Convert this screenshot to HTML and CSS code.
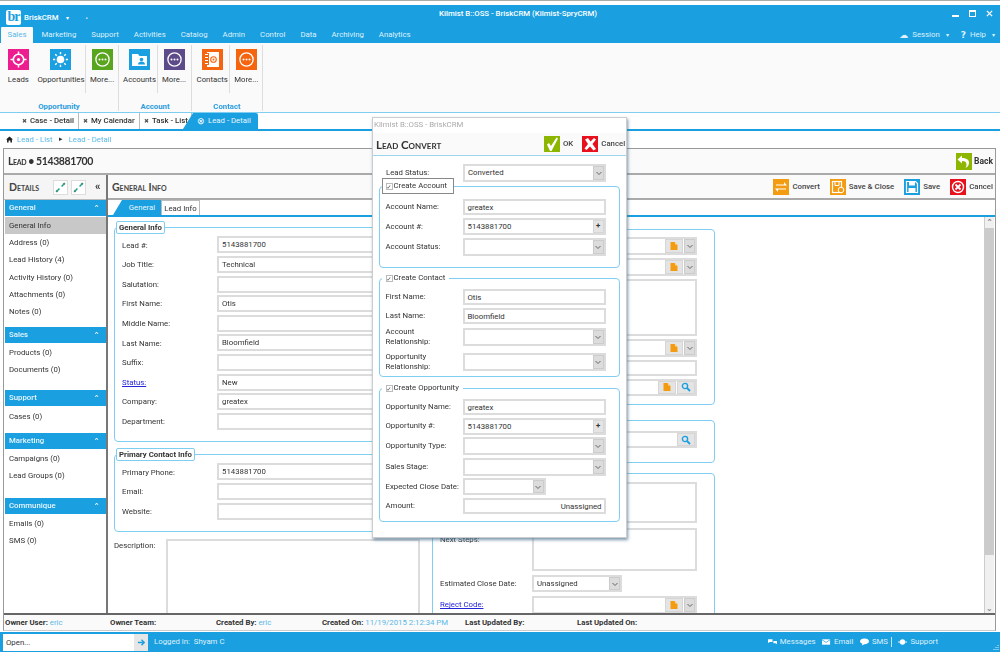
FILE: index.html
```html
<!DOCTYPE html>
<html lang="en">
<head>
<meta charset="utf-8">
<title>BriskCRM</title>
<link rel="stylesheet" href="styles.css">
</head>
<body>
<svg class="defs" width="0" height="0" aria-hidden="true">
  <symbol id="i-more" viewBox="0 0 21 21"><circle cx="10.5" cy="10.5" r="6.6" fill="none" stroke="#fff" stroke-width="1.3"/><circle cx="7.5" cy="10.5" r="1" fill="#fff"/><circle cx="10.5" cy="10.5" r="1" fill="#fff"/><circle cx="13.5" cy="10.5" r="1" fill="#fff"/></symbol>
  <symbol id="i-target" viewBox="0 0 21 21"><circle cx="10.5" cy="10.5" r="5.2" fill="none" stroke="#fff" stroke-width="1.6"/><circle cx="10.5" cy="10.5" r="1.6" fill="#fff"/><path d="M10.5 2.5v3.4M10.5 15.1v3.4M2.5 10.5h3.4M15.1 10.5h3.4" stroke="#fff" stroke-width="1.5"/></symbol>
  <symbol id="i-sun" viewBox="0 0 21 21"><circle cx="10.5" cy="10.5" r="3.8" fill="#fff"/><path d="M10.5 3v2.2M10.5 15.8V18M3 10.5h2.2M15.8 10.5H18M5.2 5.2l1.6 1.6M14.2 14.2l1.6 1.6M15.8 5.2l-1.6 1.6M6.8 14.2l-1.6 1.6" stroke="#fff" stroke-width="1.4"/></symbol>
  <symbol id="i-folder" viewBox="0 0 21 21"><path d="M3 5h6l1.5 2H18v10H3z" fill="#fff"/><circle cx="12.5" cy="10.5" r="1.8" fill="#1a9fe0"/><path d="M9 15.5c0-2 1.6-3 3.5-3s3.500 1 3.500 3z" fill="#1a9fe0"/></symbol>
  <symbol id="i-book" viewBox="0 0 21 21"><rect x="5" y="3" width="12" height="15" fill="#fff"/><path d="M3 5.500h4M3 8.500h4M3 11.500h4M3 14.500h4" stroke="#f5640e" stroke-width="3"/><path d="M3 5.500h3M3 8.500h3M3 11.500h3M3 14.500h3" stroke="#fff" stroke-width="1.200"/><circle cx="11.500" cy="10.500" r="2.800" fill="none" stroke="#f5640e" stroke-width="1.100"/><circle cx="11.500" cy="10.500" r="1" fill="#f5640e"/></symbol>
  <symbol id="i-check" viewBox="0 0 16 16"><path d="M3 8.500l2-1.500 2 3L12.500 1.500l1.500 1L7.500 15H6z" fill="#fff"/></symbol>
  <symbol id="i-x" viewBox="0 0 16 16"><path d="M3 3.500L6 2l2.500 3.500L12 2l2 1.500L10.500 8l3.500 5-2.500 1.500L8 10.500 4.500 14 2.500 12.500 6 8z" fill="#fff"/></symbol>
  <symbol id="i-doc" viewBox="0 0 10 10"><path d="M1.500 1h4l3 3v5h-7z" fill="#f39c12"/><path d="M6 1l2.500 2.500H6z" fill="#fbd38a"/></symbol>
  <symbol id="i-search" viewBox="0 0 10 10"><circle cx="4" cy="4" r="2.600" fill="none" stroke="#1a9fe0" stroke-width="1.400"/><path d="M6 6l3 3" stroke="#1a9fe0" stroke-width="1.800"/></symbol>
  <symbol id="i-chev" viewBox="0 0 8 8"><path d="M1.500 3l2.500 2.500L6.500 3" fill="none" stroke="#666" stroke-width="1"/></symbol>
  <symbol id="i-link" viewBox="0 0 12 12"><path d="M3.500 8.500l1.500-1.500M7 5l1.500-1.500" stroke="#17a589" stroke-width="1.400"/><path d="M2 10l1.500-1.500M8.500 3.500L10 2" stroke="#2e8b7a" stroke-width="1.800"/></symbol>
</svg>

<div class="topline"></div>

<header class="titlebar">
  <div class="brand">
    <span class="logo">br</span>
    <span>BriskCRM</span>
    <span class="caret">▾</span>
    <span class="pin">▪</span>
  </div>
  <div class="apptitle">Kilmist B::OSS - BriskCRM (Kilmist-SpryCRM)</div>
  <div class="winbtns">
    <span class="wb wb-min"></span>
    <span class="wb wb-max"></span>
    <svg class="wb-x" viewBox="0 0 8 8"><path d="M1 1l6 6M7 1L1 7" stroke="#fff" stroke-width="1.500"/></svg>
  </div>
</header>

<nav class="menubar">
  <span class="mtab active">Sales</span>
  <span class="mtab">Marketing</span>
  <span class="mtab">Support</span>
  <span class="mtab">Activities</span>
  <span class="mtab">Catalog</span>
  <span class="mtab">Admin</span>
  <span class="mtab">Control</span>
  <span class="mtab">Data</span>
  <span class="mtab">Archiving</span>
  <span class="mtab">Analytics</span>
  <span class="menuright">
    <span class="glyph">☁</span><span>Session</span><span class="caret">▾</span>
    <span class="glyph help">?</span><span>Help</span><span class="caret">▾</span>
  </span>
</nav>

<section class="ribbon">
  <div class="rgroup g1">
    <div class="ritems">
      <div class="ritem w-leads"><svg class="ricon pink"><use href="#i-target"/></svg><span>Leads</span></div>
      <div class="ritem w-opp"><svg class="ricon blue"><use href="#i-sun"/></svg><span>Opportunities</span></div>
      <div class="rsep"></div>
      <div class="ritem w-more"><svg class="ricon green"><use href="#i-more"/></svg><span>More...</span></div>
    </div>
    <div class="rlabel">Opportunity</div>
  </div>
  <div class="rgroup g2">
    <div class="ritems">
      <div class="ritem w-acc"><svg class="ricon blue"><use href="#i-folder"/></svg><span>Accounts</span></div>
      <div class="rsep"></div>
      <div class="ritem w-more2"><svg class="ricon purple"><use href="#i-more"/></svg><span>More...</span></div>
    </div>
    <div class="rlabel">Account</div>
  </div>
  <div class="rgroup g3">
    <div class="ritems">
      <div class="ritem w-acc"><svg class="ricon orange"><use href="#i-book"/></svg><span>Contacts</span></div>
      <div class="rsep"></div>
      <div class="ritem w-more2"><svg class="ricon orange"><use href="#i-more"/></svg><span>More...</span></div>
    </div>
    <div class="rlabel">Contact</div>
  </div>
</section>

<div class="doctabs">
  <span class="dtab t1"><b>✖</b> Case - Detail</span>
  <span class="dtab t2"><b>✖</b> My Calendar</span>
  <span class="dtab t3"><b>✖</b> Task - List</span>
  <span class="dtab active"><b>⊗</b> Lead - Detail</span>
</div>

<div class="crumbs">
  <svg class="home" viewBox="0 0 8 8"><path d="M4 .5L8 4H6.800v3.500H5V5H3v2.500H1.200V4H0z" fill="#222"/></svg>
  <a>Lead - List</a>
  <span class="crumbarrow">▸</span>
  <a>Lead - Detail</a>
</div>

<main class="panel">
  <div class="pagehead">
    <h1>Lead • 5143881700</h1>
    <span class="backbtn"><svg class="tbicon limebg" viewBox="0 0 16 16"><path d="M6 2L1.500 6 6 10V7.500c3 0 4.500 1 4.500 3.500 0 1.500-.5 2.500-1 3.500 2.500-1 3.500-3 3.500-5.500C13 6 10 4.500 6 4.500z" fill="#fff"/></svg><b>Back</b></span>
  </div>

  <div class="split">
    <aside class="side">
      <div class="sidehead">
        <h2>Details</h2>
        <span class="sbtn"><svg viewBox="0 0 12 12"><use href="#i-link"/></svg></span>
        <span class="sbtn"><svg viewBox="0 0 12 12"><use href="#i-link"/></svg></span>
        <span class="collapse">«</span>
      </div>
      <div class="sgroup">General<i>⌃</i></div>
      <ul class="slist l1">
        <li class="sel">General Info</li>
        <li>Address (0)</li>
        <li>Lead History (4)</li>
        <li>Activity History (0)</li>
        <li>Attachments (0)</li>
        <li>Notes (0)</li>
      </ul>
      <div class="sgroup">Sales<i>⌃</i></div>
      <ul class="slist l2">
        <li>Products (0)</li>
        <li>Documents (0)</li>
      </ul>
      <div class="sgroup">Support<i>⌃</i></div>
      <ul class="slist l3">
        <li>Cases (0)</li>
      </ul>
      <div class="sgroup">Marketing<i>⌃</i></div>
      <ul class="slist l4">
        <li>Campaigns (0)</li>
        <li>Lead Groups (0)</li>
      </ul>
      <div class="sgroup">Communique<i>⌃</i></div>
      <ul class="slist l5">
        <li>Emails (0)</li>
        <li>SMS (0)</li>
      </ul>
    </aside>

    <div class="content">
      <div class="contenthead">
        <h2>General Info</h2>
        <div class="toolbar">
          <span class="tb"><svg class="tbicon amber" viewBox="0 0 16 16"><path d="M3 5.500h8V3l3 3.500H3zM13 10.500H5V13L2 9.500h11z" fill="#fff"/></svg>Convert</span>
          <span class="tb"><svg class="tbicon amber" viewBox="0 0 16 16"><rect x="2.500" y="2.500" width="9" height="11" fill="none" stroke="#fff" stroke-width="1.200"/><path d="M5 2.500v4h4v-4" fill="none" stroke="#fff"/><circle cx="11" cy="11" r="2.800" fill="#f39c12" stroke="#fff"/></svg>Save &amp; Close</span>
          <span class="tb"><svg class="tbicon sky" viewBox="0 0 16 16"><path d="M2.500 2.500h9l2 2v9h-11z" fill="none" stroke="#fff" stroke-width="1.200"/><rect x="5" y="2.500" width="6" height="4" fill="#fff"/><rect x="4.500" y="9" width="7" height="4.500" fill="#fff"/></svg>Save</span>
          <span class="tb"><svg class="tbicon red" viewBox="0 0 16 16"><circle cx="8" cy="8" r="5.500" fill="none" stroke="#fff" stroke-width="1.400"/><path d="M5.500 5.500l5 5M10.500 5.500l-5 5" stroke="#fff" stroke-width="1.800"/></svg>Cancel</span>
        </div>
      </div>

      <div class="tabs">
        <span class="tab active">General</span>
        <span class="tab">Lead Info</span>
      </div>

      <div class="scrollwrap">
        <div class="formarea">
          <div class="col col-left">
            <fieldset class="fs fs-info">
              <legend>General Info</legend>
              <div class="grid">
                <label>Lead #:</label><div class="inp">5143881700</div>
                <label>Job Title:</label><div class="inp">Technical</div>
                <label>Salutation:</label><div class="inp"></div>
                <label>First Name:</label><div class="inp">Otis</div>
                <label>Middle Name:</label><div class="inp"></div>
                <label>Last Name:</label><div class="inp">Bloomfield</div>
                <label>Suffix:</label><div class="inp"></div>
                <label><a class="lnk">Status:</a></label><div class="inp">New</div>
                <label>Company:</label><div class="inp">greatex</div>
                <label>Department:</label><div class="inp"></div>
              </div>
            </fieldset>
            <fieldset class="fs fs-contact">
              <legend>Primary Contact Info</legend>
              <div class="grid">
                <label>Primary Phone:</label><div class="inp">5143881700</div>
                <label>Email:</label><div class="inp"></div>
                <label>Website:</label><div class="inp"></div>
              </div>
            </fieldset>
            <div class="desc">
              <label>Description:</label>
              <div class="inp area"></div>
            </div>
          </div>

          <div class="col col-right">
            <fieldset class="fs rf1">
              <div class="inp ctl h18"><span class="ib"><svg><use href="#i-doc"/></svg></span><span class="dd"><svg><use href="#i-chev"/></svg></span></div>
              <div class="inp ctl h18"><span class="ib"><svg><use href="#i-doc"/></svg></span><span class="dd"><svg><use href="#i-chev"/></svg></span></div>
              <div class="inp area a57"></div>
              <div class="inp ctl h18"><span class="ib"><svg><use href="#i-doc"/></svg></span><span class="dd"><svg><use href="#i-chev"/></svg></span></div>
              <div class="inp h16"></div>
              <div class="inp ctl h17"><span class="ib"><svg><use href="#i-doc"/></svg></span><span class="ib"><svg><use href="#i-search"/></svg></span></div>
            </fieldset>
            <fieldset class="fs rf2">
              <div class="inp ctl h17"><span class="ib"><svg><use href="#i-search"/></svg></span></div>
            </fieldset>
            <fieldset class="fs rf3">
              <div class="inp area a41"></div>
              <div class="rrow tall"><label>Next Steps:</label><div class="inp area a43"></div></div>
              <div class="rrow"><label>Estimated Close Date:</label><div class="inp ctl h17 short">Unassigned<span class="dd"><svg><use href="#i-chev"/></svg></span></div></div>
              <div class="rrow"><label><a class="lnk">Reject Code:</a></label><div class="inp ctl h18"><span class="ib"><svg><use href="#i-doc"/></svg></span><span class="dd"><svg><use href="#i-chev"/></svg></span></div></div>
            </fieldset>
          </div>
        </div>
        <div class="scrollbar">
          <span class="sb-arrow">⌃</span>
          <span class="sb-thumb"></span>
          <span class="sb-arrow down">⌃</span>
        </div>
      </div>
    </div>
  </div>

  <div class="statusbar">
    <span class="st s1"><b>Owner User:</b> <a>eric</a></span>
    <span class="st s2"><b>Owner Team:</b></span>
    <span class="st s3"><b>Created By:</b> <a>eric</a></span>
    <span class="st s4"><b>Created On:</b> <a>11/19/2015 2:12:34 PM</a></span>
    <span class="st s5"><b>Last Updated By:</b></span>
    <span class="st s6"><b>Last Updated On:</b></span>
  </div>
</main>

<footer class="bottombar">
  <div class="openbox">Open...</div>
  <span class="openbtn"><svg viewBox="0 0 10 10"><path d="M1 5h7M5 2l3 3-3 3" fill="none" stroke="#1a9fe0" stroke-width="1.600"/></svg></span>
  <span class="logged">Logged in:&nbsp; Shyam C</span>
  <div class="bbright">
    <span class="bb"><svg viewBox="0 0 10 8"><path d="M0 1h5v3H2L0 5zM6 3h4v3.500L8.500 5.500H6z" fill="#fff"/></svg>Messages</span>
    <span class="bb"><svg viewBox="0 0 10 8"><rect y="1" width="9" height="6" fill="#fff"/><path d="M0 1.500l4.500 3 4.500-3" fill="none" stroke="#1a9fe0" stroke-width=".8"/></svg>Email</span>
    <span class="bb sms"><svg viewBox="0 0 10 8"><path d="M5 0c3 0 5 1.300 5 3.200S8 6.400 5 6.400L2 8l.7-2C1 5.500 0 4.500 0 3.200 0 1.300 2 0 5 0z" fill="#fff"/></svg>SMS</span>
    <span class="bb"><svg viewBox="0 0 10 8"><circle cx="5" cy="4" r="3" fill="#fff"/><path d="M0 4h10" stroke="#fff"/></svg>Support</span>
  </div>
  <svg class="grip" viewBox="0 0 6 6"><path d="M4.500 0h1v1h-1zM2.500 2h1v1h-1zM4.500 2h1v1h-1zM.5 4h1v1h-1zM2.500 4h1v1h-1zM4.500 4h1v1h-1z" fill="#d5eefa"/></svg>
</footer>

<section class="dialog">
  <div class="dlgtitle">Kilmist B::OSS - BriskCRM</div>
  <div class="dlghead">
    <h2>Lead Convert</h2>
    <span class="dlgbtn"><svg class="dlgicon limebg" viewBox="0 0 16 16"><use href="#i-check"/></svg>OK</span>
    <span class="dlgbtn"><svg class="dlgicon redx" viewBox="0 0 16 16"><use href="#i-x"/></svg>Cancel</span>
  </div>
  <div class="dlgbody">
    <div class="drow status"><label>Lead Status:</label><div class="inp ctl h18">Converted<span class="dd"><svg><use href="#i-chev"/></svg></span></div></div>

    <fieldset class="fs dfs d1">
      <legend class="focus"><span class="cb">✓</span>Create Account</legend>
      <div class="drow"><label>Account Name:</label><div class="inp h16">greatex</div></div>
      <div class="drow"><label>Account #:</label><div class="inp ctl h17">5143881700<span class="plus">+</span></div></div>
      <div class="drow"><label>Account Status:</label><div class="inp ctl h18"><span class="dd"><svg><use href="#i-chev"/></svg></span></div></div>
    </fieldset>

    <fieldset class="fs dfs d2">
      <legend><span class="cb">✓</span>Create Contact</legend>
      <div class="drow"><label>First Name:</label><div class="inp h16">Otis</div></div>
      <div class="drow"><label>Last Name:</label><div class="inp h16">Bloomfield</div></div>
      <div class="drow gapped"><label class="two">Account Relationship:</label><div class="inp ctl h18"><span class="dd"><svg><use href="#i-chev"/></svg></span></div></div>
      <div class="drow"><label class="two">Opportunity Relationship:</label><div class="inp ctl h18"><span class="dd"><svg><use href="#i-chev"/></svg></span></div></div>
    </fieldset>

    <fieldset class="fs dfs d3">
      <legend><span class="cb">✓</span>Create Opportunity</legend>
      <div class="drow"><label>Opportunity Name:</label><div class="inp h16">greatex</div></div>
      <div class="drow"><label>Opportunity #:</label><div class="inp ctl h17">5143881700<span class="plus">+</span></div></div>
      <div class="drow"><label>Opportunity Type:</label><div class="inp ctl h18"><span class="dd"><svg><use href="#i-chev"/></svg></span></div></div>
      <div class="drow"><label>Sales Stage:</label><div class="inp ctl h18"><span class="dd"><svg><use href="#i-chev"/></svg></span></div></div>
      <div class="drow"><label class="nowrap">Expected Close Date:</label><div class="inp ctl h17 date"><span class="dd"><svg><use href="#i-chev"/></svg></span></div></div>
      <div class="drow"><label>Amount:</label><div class="inp h16 right">Unassigned</div></div>
    </fieldset>
  </div>
</section>
</body>
</html>
```

FILE: styles.css
```css
* { box-sizing: border-box; }
html, body { height: 100%; }
body {
  margin: 0;
  width: 1000px;
  height: 652px;
  overflow: hidden;
  position: relative;
  display: flex;
  flex-direction: column;
  background: #fff;
  color: #333;
  font: 7.8px/1.2 "Roboto", "Open Sans", sans-serif;
  filter: blur(0.45px);
}
.defs { position: absolute; }
h1, h2, ul, fieldset, legend { margin: 0; padding: 0; }
b { font-weight: 500; }
a { color: #5bb8e8; }

.topline { height: 5px; border-top: 1px solid #aaa; background: #fff; flex: none; }

.titlebar {
  height: 22px; flex: none; background: #1a9fe0; color: #fff;
  display: flex; align-items: center; position: relative; padding-left: 6px;
}
.brand { display: flex; align-items: center; gap: 3px; width: 433px; margin-top: 3px; font-weight: 500; }
.logo {
  width: 15px; height: 15px; border-radius: 2px; background: #fff; color: #1a9fe0;
  font: bold 14px/13px "Liberation Serif", serif; text-align: center; letter-spacing: -1px;
}
.caret { font-size: 6px; margin-left: 4px; }
.pin { margin-left: 14px; font-size: 6px; color: #cde; }
.apptitle { width: 164px; white-space: nowrap; font-weight: 500; margin-top: -5px; }
.winbtns { margin-left: auto; display: flex; align-items: center; gap: 10px; padding-right: 7px; margin-top: -5px; }
.wb { display: block; width: 7px; height: 7px; }
.wb-min { border-bottom: 2px solid #fff; }
.wb-max { border: 1px solid #fff; border-top-width: 2px; }
.wb-x { width: 7px; height: 7px; }

.menubar { height: 16px; flex: none; background: #1a9fe0; color: #dff1fb; display: flex; align-items: center; }
.mtab { padding: 0 7.500px; line-height: 16px; }
.mtab.active { background: #fafafa; color: #5bb8e8; margin: 0 1px; padding: 0 6.500px; border-radius: 1px 1px 0 0; }
.menuright { margin-left: auto; display: flex; align-items: center; gap: 2px; padding-right: 1px; }
.menuright .caret { margin: 0 4px; }
.glyph { font: 9px "DejaVu Sans", sans-serif; margin-right: 2px; }
.help { margin-left: 6px; font-weight: 700; }

.ribbon { height: 70px; flex: none; background: #fafafa; display: flex; border-bottom: 1px solid #7fcdf0; }
.rgroup { border-right: 1px solid #ddd; display: flex; flex-direction: column; margin-top: 2px; height: 66px; }
.g1 { width: 119px; } .g2 { width: 73px; } .g3 { width: 71px; }
.ritems { display: flex; height: 52px; }
.ritem { display: flex; flex-direction: column; align-items: center; padding-top: 4px; gap: 5px; color: #333; white-space: nowrap; }
.w-leads { width: 37px; } .w-opp { width: 49px; } .w-more { width: 32px; }
.w-acc { width: 38px; padding-left: 3px; } .w-more2 { width: 32px; }
.rsep { width: 1px; height: 48px; background: #ddd; flex: none; }
.ricon { width: 21px; height: 21px; display: block; }
.pink { background: #ee1d8f; } .blue { background: #1a9fe0; } .green { background: #5aa51e; }
.purple { background: #5d4a8a; } .orange { background: #f5640e; }
.rlabel { text-align: center; color: #2a9de0; font-weight: 700; margin-top: -1px; padding-top: 7px; }

.doctabs { height: 18px; flex: none; background: #fff; display: flex; align-items: stretch; padding-left: 22px; border-bottom: 2px solid #1a9fe0; }
.dtab { display: flex; align-items: center; gap: 3px; padding-right: 5px; border-right: 1px solid #bbb; white-space: nowrap; font-weight: 500; }
.dtab b { font-size: 6px; color: #555; }
.t1 { width: 57px; } .t2 { width: 61px; padding-left: 4px; } .t3 { width: 52px; padding-left: 4px; }
.dtab.active { background: #1a9fe0; color: #e8f6fd; border: 0; width: 75px; padding-left: 14px; margin-left: -9px; clip-path: polygon(10px 0, 100% 0, 100% 100%, 0 100%); border-radius: 0 2px 0 0; font-weight: 400; }
.dtab.active b { color: #fff; font-size: 9px; }

.crumbs { height: 17px; flex: none; display: flex; align-items: center; padding-left: 6px; gap: 4px; }
.crumbs a { color: #5bb8e8; }
.home { width: 7px; height: 7px; }
.crumbarrow { color: #333; font-size: 7px; margin: 0 2px; }

.panel { flex: 1; min-height: 0; margin: 0 4px 1px 3px; border: 1px solid #999; border-bottom-color: #ccc; display: flex; flex-direction: column; background: #fff; }
.pagehead { height: 26px; flex: none; background: #fafafa; border-bottom: 2px solid #aaa; display: flex; align-items: center; padding: 0 2px 0 4px; }
h1 { font: 700 10.500px "Lato", sans-serif; font-variant: small-caps; color: #333; letter-spacing: -.4px; }
.backbtn { margin-left: auto; display: flex; align-items: center; gap: 2px; color: #333; font-size: 8.5px; }
.backbtn b { font-weight: 700; }
.tbicon { width: 16px; height: 16px; display: block; flex: none; }
.backbtn .tbicon { width: 16px; height: 17px; }
.limebg { background: #8db600; } .amber { background: #f39c12; } .sky { background: #1a9fe0; } .red { background: #e8101c; }

.split { flex: 1; min-height: 0; display: flex; }
.side { width: 104px; flex: none; border-right: 2px solid #777; background: #fff; overflow: hidden; }
.sidehead { height: 25px; background: #f5f5f5; border-bottom: 1px solid #bbb; display: flex; align-items: center; padding-left: 5px; }
h2 { font: 700 10.500px "Lato", sans-serif; font-variant: small-caps; color: #444; }
.sidehead h2 { width: 44px; }
.sbtn { width: 15px; height: 15px; background: #fff; border: 1px solid #ddd; margin-right: 3px; display: flex; }
.sbtn svg { width: 100%; height: 100%; }
.collapse { margin-left: 6px; font-weight: 700; font-size: 11px; line-height: 10px; }
.sgroup { height: 16px; margin-left: 1px; background: #1a9fe0; color: #e8f6fd; font-weight: 500; padding-left: 4px; line-height: 16px; display: flex; justify-content: space-between; padding-right: 6px; }
.sgroup i { font: normal 8px/18px "DejaVu Sans", sans-serif; color: #fff; }
.slist { list-style: none; margin-left: 1px; padding-top: 1px; }
.slist li { height: 17.2px; line-height: 17.2px; padding-left: 4px; color: #333; }
.slist li.sel { background: #c8c8c8; }
.l1 { height: 111px; }
.l2 { height: 47px; }
.l3 { height: 27px; padding-top: 2px; }
.l4 { height: 49px; }
.l5 { height: 50px; }

.content { flex: 1; min-width: 0; display: flex; flex-direction: column; }
.contenthead { height: 25px; flex: none; background: #fafafa; border-bottom: 2px solid #aaa; display: flex; align-items: center; padding: 0 2px 0 4px; }
.toolbar { margin-left: auto; display: flex; gap: 10px; }
.tb { display: flex; align-items: center; gap: 3px; color: #444; font-weight: 500; }
.tabs { height: 17px; flex: none; display: flex; align-items: flex-end; padding-left: 5px; border-bottom: 2px solid #1a9fe0; }
.tab { height: 15px; line-height: 15px; padding: 0; background: #fff; border: 1px solid #bbb; border-bottom: 0; width: 39px; text-align: center; white-space: nowrap; }
.tab.active { width: 48px; padding-left: 10px; background: #1a9fe0; color: #e8f6fd; border: 0; clip-path: polygon(9px 0, 100% 0, 100% 100%, 0 100%); }

.scrollwrap { flex: 1; min-height: 0; display: flex; }
.formarea { flex: 1; min-width: 0; overflow: hidden; display: flex; padding: 4px 0 0 6px; gap: 12px; }
.col { flex: none; }
.col-left { width: 306px; }
.col-right { width: 283px; padding-top: 5px; }
.fs { border: 1.500px solid #7fcdf0; border-radius: 4px; }
legend { font-weight: 700; border: 1.500px solid #7fcdf0; border-radius: 2px; padding: 1px 2px; margin-left: 1px; color: #333; background: #fff; }
.grid { display: grid; grid-template-columns: 95px 1fr; grid-auto-rows: 17px; row-gap: 2.600px; align-items: center; padding: 2px 0 0 7px; }
.fs-info { height: 221px; }
.fs-contact { margin-top: 6px; height: 84px; }
.inp { border: 2px solid #dcdcdc; height: 17px; line-height: 13px; padding-left: 3px; background: #fff; color: #333; position: relative; }
.grid label, .desc label { color: #333; }
.grid label { padding-top: 1px; }
.lnk { color: #2323d8; text-decoration: underline; }
.desc { display: flex; margin-top: 7px; }
.desc label { width: 52px; padding-top: 2px; }
.desc .area { flex: 1; height: 80px; }

.ctl { display: flex; justify-content: flex-start; align-items: stretch; gap: 1px; padding-right: 0; }
.ctl .ib:first-of-type, .ctl .dd:first-of-type, .ctl .plus { margin-left: auto; }
.ib { width: 18px; background: #e4e4e4; border: 1px solid #d6d6d6; display: flex; align-items: center; justify-content: center; flex: none; }
.ib svg { width: 10px; height: 10px; }
.dd { width: 11px; background: #dcdcdc; border: 1px solid #ccc; display: flex; align-items: center; justify-content: center; flex: none; }
.dd svg { width: 8px; height: 8px; }
.ib + .dd { margin-left: 0; }
.plus { width: 11px; background: #e4e4e4; border: 1px solid #d6d6d6; text-align: center; line-height: 9px; font-weight: 700; flex: none; margin: 0 0 0 auto; }
.h16 { height: 16px; } .h17 { height: 17px; } .h18 { height: 18px; }
.a57 { height: 57px; } .a41 { height: 41px; } .a43 { height: 43px; }
.right { text-align: right; padding-right: 2px; }

.rf1, .rf2, .rf3 { width: 283px; padding: 6.500px 17px 0 99px; display: flex; flex-direction: column; gap: 3px; }
.rf1 { height: 176px; margin-top: 3px; }
.rf2 { height: 43px; margin-top: 15px; padding-top: 10px; }
.rf3 { height: 170px; margin-top: 10px; padding-top: 8px; gap: 4px; }
.rrow { display: flex; margin-left: -92px; align-items: center; }
.rrow label { width: 92px; flex: none; color: #333; }
.rrow .inp { flex: 1; }
.rrow .short { flex: none; width: 90px; }
.rrow.tall { align-items: flex-start; margin-top: 1px; }
.rrow.tall label { padding-top: 7px; }

.scrollbar { width: 10px; flex: none; margin-right: 1px; background: #f0f0f0; display: flex; flex-direction: column; align-items: center; border-left: 1px solid #ccc; }
.sb-arrow { height: 10px; font: 8px/12px "DejaVu Sans", sans-serif; color: #666; }
.sb-arrow.down { transform: rotate(180deg); margin-top: auto; }
.sb-thumb { width: 100%; height: 327px; background: #cbcbcb; margin-top: 1px; }

.statusbar { height: 17px; flex: none; background: #fafafa; border-top: 2px solid #666; display: flex; align-items: center; padding-left: 1px; white-space: nowrap; }
.st b { color: #333; font-weight: 700; }
.s1 { width: 105px; } .s2 { width: 106px; } .s3 { width: 106px; } .s4 { width: 143px; } .s5 { width: 112px; }

.bottombar { height: 20px; flex: none; background: #1a9fe0; color: #dff1fb; display: flex; align-items: center; padding: 0 1px 0 3px; }
.openbox { width: 131px; height: 17px; background: #fff; color: #333; line-height: 17px; padding-left: 3px; }
.openbtn { width: 14px; height: 17px; background: #e6e6e6; display: flex; align-items: center; justify-content: center; }
.openbtn svg { width: 9px; height: 9px; }
.logged { margin-left: 6px; }
.bbright { margin-left: auto; display: flex; gap: 6.500px; }
.bb { display: flex; align-items: center; gap: 3px; }
.bb svg { width: 9px; height: 8px; }
.sms { border-right: 1px solid #bfe4f7; padding-right: 3px; }
.grip { width: 6px; height: 6px; margin-left: 55px; align-self: flex-end; margin-bottom: 1px; }

.dialog {
  position: absolute; left: 372px; top: 117px; width: 255px; height: 421px;
  background: #fff; border: 1px solid #ccc; box-shadow: 1px 2px 3px rgba(70, 110, 140, .7);
  display: flex; flex-direction: column;
}
.dlgtitle { height: 15px; line-height: 14px; padding-left: 1px; color: #aaa; flex: none; }
.dlghead { height: 23px; flex: none; background: #fafafa; border-bottom: 1px solid #9fd4ef; display: flex; align-items: center; padding-left: 3px; gap: 3px; font-weight: 500; }
.dlghead h2 { width: 165px; font-size: 11.500px; color: #333; }
.dlgbtn { display: flex; align-items: center; gap: 3px; margin-right: 6px; color: #444; }
.dlgbtn:last-child { margin: 0; }
.dlgicon { width: 16px; height: 16px; flex: none; }
.redx { background: #e8101c; }
.dlgbody { padding: 8px 6px 0 6px; }
.drow { display: grid; grid-template-columns: 77px 143px; align-items: center; margin-bottom: 3px; color: #333; }
.status { margin: 0 0 -4px; padding-left: 7px; grid-template-columns: 77px 143px; }
.dfs { width: 241px; padding: 0 0 0 5.500px; }
.dfs legend { font-weight: 400; border: 1px solid transparent; padding: 1px 3px 1px 3px; margin-left: -4px; display: flex; align-items: center; gap: 1px; height: 16px; }
.dfs legend.focus { border-color: #888; border-radius: 0; padding-right: 6px; }
.cb { width: 7px; height: 7px; border: 1px solid #bbb; font: 6px/6px "DejaVu Sans", sans-serif; text-align: center; }
.d1 { height: 90px; padding-top: 5px; }
.d2 { height: 107px; margin-top: 2px; padding-top: 3px; }
.d3 { height: 142px; margin-top: 3px; padding-top: 3px; }
.d3 .drow { margin-bottom: 2.500px; }
.gapped { margin-bottom: 5px; }
.two { line-height: 10px; width: 60px; }
.nowrap { white-space: nowrap; }
.date { width: 83px; }
```
